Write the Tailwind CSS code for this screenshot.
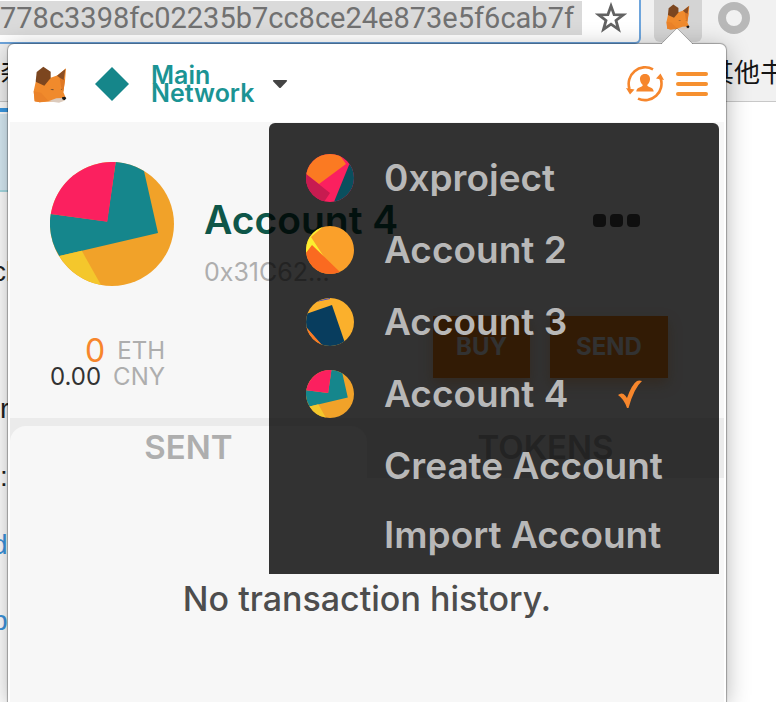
<!DOCTYPE html>
<html lang="en">
<head>
<meta charset="utf-8">
<meta name="viewport" content="width=device-width, initial-scale=1">
<title>MetaMask</title>
<script src="https://cdn.jsdelivr.net/npm/@tailwindcss/browser@4"></script>
</head>
<body class="relative h-screen overflow-hidden bg-white font-['Inter','Noto_Sans_CJK_SC',sans-serif]">

<svg class="hidden" aria-hidden="true">
  <symbol id="fox" viewBox="0 0 102 111">
    <path fill="#f08a2c" d="M8 48 31 30 53 35 74 28 99 7 96 45 91 78 98 95 92 105 66 106 20 109 5 106 2 76Z"/>
    <path fill="#ea8229" d="M2 76 24 80 46 104 20 109 5 106Z"/>
    <path fill="#df7824" d="M80 35 96 40 91 78 84 62Z"/>
    <path fill="#7c461f" d="M31 2 53 17 53 36 34 59 8 47 11 18Z"/>
    <path fill="#8a4e24" d="M72 29 97 9 92 42 80 35Z"/>
    <path fill="#dccbbd" d="M46 106 70 97 88 96 94 104 78 110Z"/>
    <path fill="#7a5230" d="m52 69 10 0-1 4-5-1ZM83 69l5-1-2 4Z"/>
    <path fill="#171717" d="m87 94 9-2 4 5-5 6-7-3Z"/>
  </symbol>
  <symbol id="ident4" viewBox="0 0 124 124">
    <circle cx="62" cy="62" r="62" fill="#f1a229"/>
    <path fill="#15868c" d="M65.700 0A62 62 0 0 1 94 9L108 71 9.300 94A62 62 0 0 1 .7 52L57 59.500Z"/>
    <path fill="#fb205f" d="M65.700 .1 57.300 59.700.8 52A62 62 0 0 1 65.700 .1Z"/>
    <path fill="#f4c72c" d="m9.300 94 22.500-5.200L51 123A62 62 0 0 1 9.300 94Z"/>
  </symbol>
</svg>

<header class="bg-[#f1f1f1] border-b border-[#c8c8c8]">
  <div class="flex h-11 items-start">
    <div class="flex h-11 flex-1 items-start justify-between border-r-2 border-b-2 border-[#6ea5dc] rounded-br-md bg-white pr-3">
      <input aria-label="Address" value="778c3398fc02235b7cc8ce24e873e5f6cab7f" class="mt-px h-[34px] w-[582px] min-w-0 bg-[#dadada] pt-0.5 font-['Roboto',sans-serif] text-[29px] text-[#717171] outline-none">
      <button aria-label="Bookmark this page" class="mt-0.5">
        <svg class="size-8" viewBox="0 0 32 32" fill="none" stroke="#626262" stroke-width="2.800"><path d="m16 4 3.100 8.600 9.100.3-7.200 5.600 2.500 8.800-7.500-5.100-7.500 5.100 2.500-8.800-7.200-5.600 9.100-.3Z"/></svg>
      </button>
    </div>
    <div class="flex w-[135px] items-start gap-4 pl-[13px]">
      <button aria-label="MetaMask" class="flex h-[42px] w-12 justify-center rounded-b-md bg-[#d4d4d4] pt-1">
        <svg class="h-[26px] w-6"><use href="#fox"/></svg>
      </button>
      <button aria-label="Extension" class="mt-0.5 size-8 rounded-full border-8 border-[#b8b8b8]"></button>
    </div>
  </div>
  <nav aria-label="Bookmarks" class="flex h-[57px] items-center justify-between overflow-hidden whitespace-nowrap text-[26px] text-[#151515]">
    <a href="#">杂</a>
    <a href="#" class="-mr-9">其他书签</a>
  </nav>
</header>

<main class="w-12 overflow-hidden pt-1.5 font-['Liberation_Sans',sans-serif] text-[28px] leading-8 text-[#222] whitespace-nowrap">
  <div class="h-1 bg-[#3a9ae4]"></div>
  <div class="mt-0.5 h-[78px] border-b-2 border-[#a8dce4] bg-[#d8ecf6]"></div>
  <p class="mt-16 -ml-2">cl</p>
  <p class="mt-[105px]">r</p>
  <p class="mt-9">:</p>
  <p class="mt-9 -ml-2"><a href="#" class="text-[#3d94dc]">d</a></p>
  <p class="mt-11 -ml-2"><a href="#" class="text-[#3d94dc]">b3</a></p>
</main>

<section aria-label="MetaMask wallet" class="absolute top-11 right-[50px] bottom-0 left-2 rounded-t-md bg-white px-0.5 shadow-[0_0_1px_1px_rgba(0,0,0,0.3),0_4px_24px_rgba(0,0,0,0.3)]">
  <svg class="absolute -top-4 right-[33px] h-[17px] w-8" viewBox="0 0 32 17"><path d="m0 16.500 16-16 16 16Z" fill="#fff"/><path d="m0 16 16-16 16 16" fill="none" stroke="#000" stroke-opacity=".2"/></svg>

  <div class="flex h-[78px] items-center pt-0.5 pr-4 pl-[23px]">
    <svg class="h-[37px] w-[34px]" aria-label="MetaMask"><use href="#fox"/></svg>
    <svg class="ml-7 size-[34px]" viewBox="0 0 34 34"><path fill="#15868a" d="m17 0 17 17-17 17L0 17Z"/></svg>
    <button class="ml-[22px] flex items-center gap-[18px] text-left text-[25px] leading-[18px] font-semibold text-[#1b9494]">
      <span>Main<br>Network</span>
      <svg class="h-2 w-4" viewBox="0 0 16 8"><path fill="#444" d="M2 0h12q2 0 .5 1.800L9 7.500q-1 1-2 0L1.500 1.800Q0 0 2 0Z"/></svg>
    </button>
    <button aria-label="Switch account" class="ml-auto">
      <svg class="h-9 w-[38px]" viewBox="0 0 38 36" fill="none" stroke="#f6862c" stroke-width="2.600">
        <path d="M27 3.300A16.500 16.500 0 0 0 3.500 23M12 32.600A16.500 16.500 0 0 0 34.500 12"/>
        <path fill="#f6862c" stroke="none" d="m0 22 8.500 1.500L4 28.500ZM38 14l-8-1.500 4.500-5Z"/>
        <path fill="#f6862c" stroke="none" d="M19 8c3.700 0 5.300 2.500 5 5.500-.2 2.600-1.500 4.500-2.800 5.500.4 2.800 6.300 1.500 6.500 6.500H10.300c.2-5 6.100-3.700 6.500-6.500-1.300-1-2.600-2.900-2.800-5.500C13.700 10.500 15.300 8 19 8Z"/>
      </svg>
    </button>
    <button aria-label="Accounts menu" class="ml-3 flex w-8 flex-col gap-1.5">
      <span class="h-1 w-8 rounded-full bg-[#f6902f]"></span>
      <span class="h-1 w-8 rounded-full bg-[#f6902f]"></span>
      <span class="h-1 w-8 rounded-full bg-[#f6902f]"></span>
    </button>
  </div>

  <div class="h-[calc(100%-78px)] overflow-hidden bg-[#f7f7f7]">
    <div class="flex h-[296px] flex-col justify-between px-10 pt-10 pb-7">
      <div class="flex gap-[30px]">
        <svg class="size-[124px]"><use href="#ident4"/></svg>
        <div class="flex flex-1 flex-col gap-[18px] pt-10">
          <div class="flex items-center justify-between pr-11">
            <h1 class="text-[39px] leading-9 font-semibold text-[#0e5649]">Account 4</h1>
            <button aria-label="Account options" class="flex gap-1">
              <span class="size-[13px] rounded-sm bg-[#4d4d4d]"></span>
              <span class="size-[13px] rounded-sm bg-[#4d4d4d]"></span>
              <span class="size-[13px] rounded-sm bg-[#4d4d4d]"></span>
            </button>
          </div>
          <p class="text-[25px] leading-8 text-[#aeaeae]">0x31C62...</p>
        </div>
      </div>
      <div class="flex items-end justify-between pr-4">
        <div class="w-[115px] text-2xl leading-[26px] text-[#aeaeae]">
          <p class="flex items-center justify-end gap-3"><span class="text-[32px] text-[#f7862c]">0</span>ETH</p>
          <p class="flex justify-between"><span class="text-[#333]">0.00</span>CNY</p>
        </div>
        <div class="flex gap-5 pb-3 text-[24px] font-bold text-[#f7f7f7]">
          <button class="h-[62px] w-[97px] bg-[#f7861c] shadow-[0_6px_12px_rgba(247,134,28,0.36)]">BUY</button>
          <button class="h-[62px] w-[118px] bg-[#f7861c] shadow-[0_6px_12px_rgba(247,134,28,0.36)]">SEND</button>
        </div>
      </div>
    </div>
    <div role="tablist" class="grid grid-cols-2 bg-[#ebebeb] pt-2 text-[33px] leading-[42px] font-semibold text-[#aeaeae]">
      <button role="tab" aria-selected="true" class="h-[52px] rounded-t-2xl bg-[#f7f7f7] pb-2.5">SENT</button>
      <button role="tab" aria-selected="false" class="h-[52px] pb-2.5">TOKENS</button>
    </div>
    <p class="mt-[101px] text-center text-[34px] leading-10 font-medium text-[#4d4d4d]">No transaction history.</p>
  </div>

  <div role="menu" aria-label="Accounts" class="absolute top-[79px] right-[7px] w-[450px] rounded-t-md bg-black/80 pt-[19px] pb-1.5 pl-[37px] text-[37px] leading-9 font-semibold text-[#b8b8b8]">
    <button role="menuitem" class="flex h-[72px] w-full items-center gap-[30px]">
      <svg class="size-12" viewBox="0 0 48 48"><clipPath id="c1"><circle cx="24" cy="24" r="24"/></clipPath><g clip-path="url(#c1)"><path fill="#fb205f" d="M0 0h48v48H0Z"/><path fill="#fb7a22" d="M0 0h33l7 10-27 20L0 20Z"/><path fill="#c71b50" d="m0 20 24 19-6 9H0Z"/><path fill="#0a4f5e" d="m28 48 15-37 5-6v43Z"/></g></svg>
      <span class="overflow-hidden">0xproject</span>
    </button>
    <button role="menuitem" class="flex h-[72px] w-full items-center gap-[30px]">
      <svg class="size-12" viewBox="0 0 48 48"><g clip-path="url(#c1)"><path fill="#faa02a" d="M0 0h48v48H0Z"/><path fill="#fbee30" d="M0 0h18L5 11l13 20L6 20 0 27Z"/><path fill="#fa6a20" d="m0 27 6-8 28 27v2H0Z"/></g></svg>
      <span>Account 2</span>
    </button>
    <button role="menuitem" class="flex h-[72px] w-full items-center gap-[30px]">
      <svg class="size-12" viewBox="0 0 48 48"><g clip-path="url(#c1)"><path fill="#fbb02c" d="M0 0h48v48H0Z"/><path fill="#083d5e" d="m0 16 26-9 14 41H16L0 29Z"/><path fill="#fa7a26" d="m0 29 17 19H0Z"/><path fill="#3c46c8" d="M11 3 24 0v1L12 3.500Z"/></g></svg>
      <span>Account 3</span>
    </button>
    <button role="menuitem" aria-current="true" class="flex h-[72px] w-full items-center gap-[30px]">
      <svg class="size-12"><use href="#ident4"/></svg>
      <span>Account 4</span>
      <svg class="ml-5 h-7 w-6" viewBox="0 0 24 28"><path fill="#f6862c" d="M0 15q3-2.500 5.500-1 2 1.500 3.500 4Q14 4 19 1q2-1 5 0-8 7-13.500 27H9Q6 19 0 15Z"/></svg>
    </button>
    <button role="menuitem" class="flex h-[72px] w-full items-center pl-[78px]">Create Account</button>
    <button role="menuitem" class="flex h-[66px] w-full items-center pl-[78px]">Import Account</button>
  </div>
</section>
</body>
</html>
